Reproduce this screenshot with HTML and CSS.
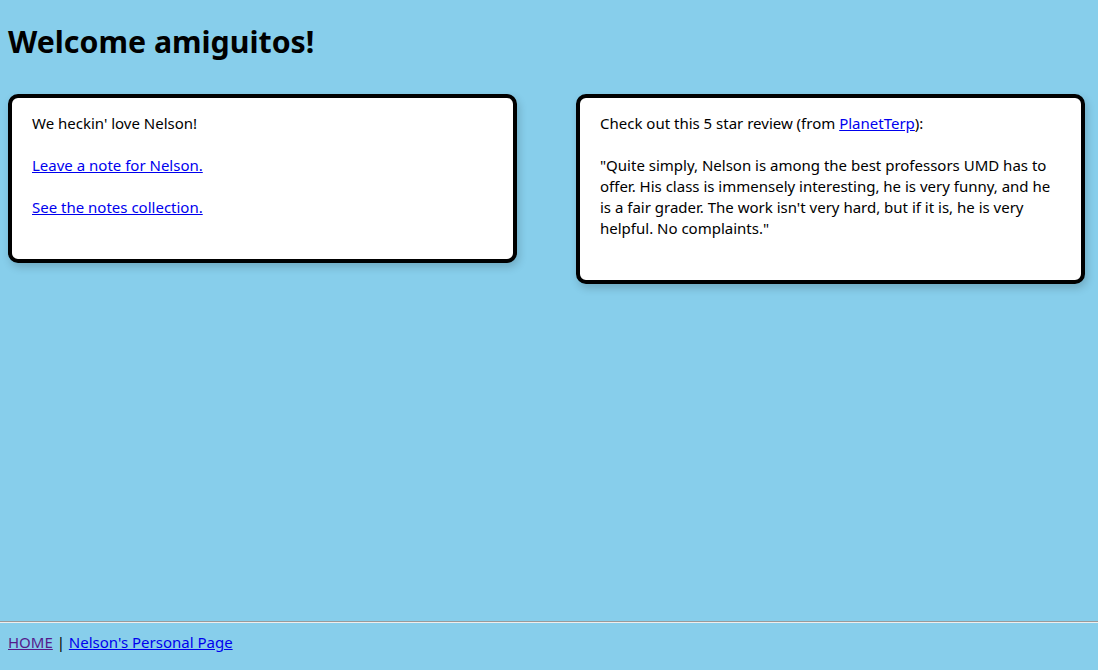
FILE: index.html
```html
<!DOCTYPE html>
<html lang="en">
<head>
<meta charset="utf-8">
<title>Welcome amiguitos!</title>
<link rel="stylesheet" href="styles.css">
</head>
<body>
<main class="main">
  <h1 class="title">Welcome amiguitos!</h1>
  <div class="cards">
    <section class="card">
      We heckin' love Nelson!<br><br>
      <a href="#" class="link">Leave a note for Nelson.</a><br><br>
      <a href="#" class="link">See the notes collection.</a>
    </section>
    <section class="card">
      Check out this 5 star review (from <a href="#" class="link">PlanetTerp</a>):<br><br>
      "Quite simply, Nelson is among the best professors UMD has to offer. His class is immensely interesting, he is very funny, and he is a fair grader. The work isn't very hard, but if it is, he is very helpful. No complaints."
    </section>
  </div>
</main>
<footer class="footer">
  <hr class="rule">
  <div class="footer-links"><a href="#" class="link visited">HOME</a> | <a href="#" class="link">Nelson's Personal Page</a></div>
</footer>
</body>
</html>
```
FILE: styles.css
```css
html, body {
  height: 100%;
}
body {
  margin: 0;
  background: #87ceeb;
  color: #000;
  font-family: "Noto Sans", "Open Sans", sans-serif;
  font-size: 15px;
  line-height: 21px;
  display: flex;
  flex-direction: column;
  min-height: 100vh;
}
.main {
  padding: 0 8px;
  flex: 1;
}
.title {
  font-size: 30.3px;
  font-weight: 700;
  line-height: 42px;
  margin: 21px 0 0;
}
.cards {
  display: grid;
  grid-template-columns: 509px 509px;
  column-gap: 59px;
  align-items: start;
  margin-top: 31px;
}
.card {
  background: #fff;
  border: 4px solid #000;
  border-radius: 10px;
  padding: 15px 20px 41px;
  box-shadow: 2px 4px 8px rgba(0, 0, 0, 0.18);
}
.link {
  color: #0000ee;
  text-decoration: underline;
}
.link.visited {
  color: #551a8b;
}
.rule {
  margin: 0;
  border: 0;
  border-top: 1px solid #9a9a9a;
  border-bottom: 1px solid #eeeeee;
  height: 0;
}
.footer-links {
  padding: 9px 8px 17px;
}
```
